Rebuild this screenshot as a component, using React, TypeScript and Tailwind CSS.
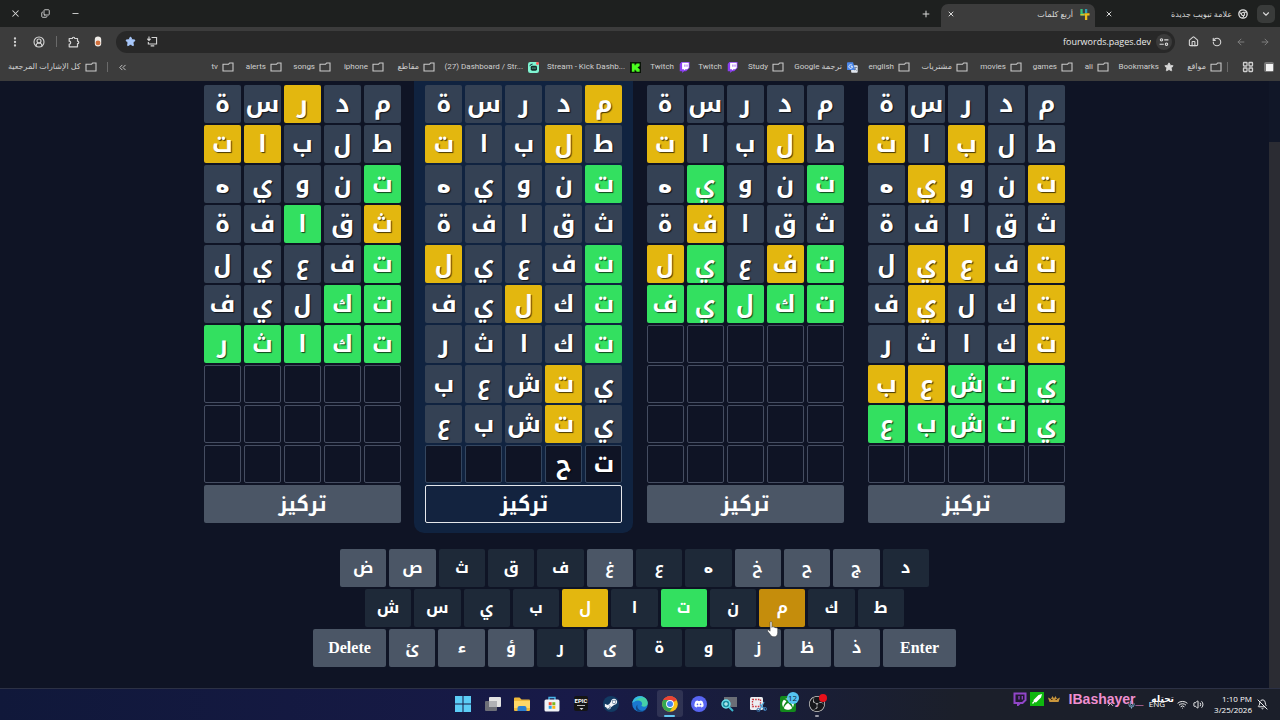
import React from "react";
import {
  ArrowLeft, ArrowRight, ChevronDown, ChevronsLeft, CircleUserRound, Copy, EllipsisVertical, House, LayoutGrid,
  Minus, Plus, RotateCcw, Star, Wifi, Volume2, BellOff, X, ChevronUp, Mic,
} from "lucide-react";
import { FaDiscord, FaSteamSymbol, FaXbox } from "react-icons/fa";
import { SiObsstudio } from "react-icons/si";

const UI = "font-['Open_Sans','DejaVu_Sans',sans-serif]";

/* ---------- small icons ---------- */

const Folder = () => (
  <svg viewBox="0 0 12 10" className="h-[10px] w-[12px]" fill="none" stroke="#c9c9c9" strokeWidth="1.1">
    <path d="M1 2.2h5.6L7.7 1H11v8H1z" />
  </svg>
);

const Twitch = () => (
  <svg viewBox="0 0 12 12" className="h-[11px] w-[11px]">
    <path d="M2.5 0 .8 2.3V10H3.5v2L5.6 10h2.2L11.5 6.6V0z" fill="#8b3ff0" />
    <path d="M3.4.9h7.2v5.3L8.9 7.9H7L5.4 9.4V7.9h-2z" fill="#fff" />
    <path d="M6 2.6h.9v2.7H6zM8.3 2.6h.9v2.7h-.9z" fill="#8b3ff0" />
  </svg>
);

const Kick = () => (
  <svg viewBox="0 0 12 12" className="h-[11px] w-[11px]">
    <path d="M0 0h12v12H0z" fill="#0a1408" />
    <path d="M2 1.5h3v2h1v-1h1v-1h3.5v3h-1v1h-1v1h1v1h1v3H7v-1H6v-1H5v2H2z" fill="#4bff1f" />
  </svg>
);

const Streamlabs = () => (
  <svg viewBox="0 0 12 12" className="h-[11px] w-[11px]">
    <rect width="12" height="12" rx="2.5" fill="#80f5d2" />
    <path d="M2 4.5Q2.3 2.3 5 2.3" fill="none" stroke="#123" strokeWidth="1" />
    <rect x="3" y="4.2" width="6.8" height="5.4" rx="1.6" fill="#16322d" />
    <path d="M5.4 6v1.4M7.6 6v1.4" stroke="#80f5d2" strokeWidth=".9" />
    <circle cx="10.3" cy="1.6" r="1.6" fill="#ff5a5a" />
  </svg>
);

const Translate = () => (
  <svg viewBox="0 0 12 12" className="h-[11px] w-[11px]">
    <rect x="4.5" y="3.5" width="7.2" height="8.2" rx="1" fill="#dfe5ee" />
    <path d="M1 .3h5.6L9 8.8H1a1 1 0 0 1-1-1V1.3a1 1 0 0 1 1-1z" fill="#4a86e8" />
    <path d="M5.6 3.8A2 2 0 1 0 6 5H4.2" fill="none" stroke="#fff" strokeWidth=".9" />
    <path d="M8 6h3M9.5 5.2V6c0 1.4-.8 2.4-1.7 3M8.6 7.3l2.1 2.2" fill="none" stroke="#5b6b80" strokeWidth=".7" />
  </svg>
);

const FilledStar = () => <Star className="h-[10px] w-[10px] fill-[#d8d8d8] text-[#d8d8d8]" />;

const FourWords = () => (
  <svg viewBox="0 0 12 12" className="h-[11px] w-[11px]">
    <path d="M1.500 0h2.500v4.500H6V7H1.500z" fill="#37c27a" />
    <path d="M6.500 0H9v4.500H6.500z" fill="#2e9fb5" />
    <path d="M6 4.500h5.500V7H9v5H6.500V7H6z" fill="#f0bd1c" />
    <path d="M1.500 5.500H6V7H1.500z" fill="#d9c22e" />
  </svg>
);

const ChromeMono = () => (
  <svg viewBox="0 0 12 12" className="h-[10px] w-[10px]" fill="none" stroke="#dedede" strokeWidth="1.6">
    <circle cx="6" cy="6" r="5" />
    <circle cx="6" cy="6" r="1.9" strokeWidth="1.3" />
    <path d="M6 3.9h4.6M4.2 7 1.8 3.2M7.8 7 5.4 11" strokeWidth="1.2" />
  </svg>
);

const Tune = () => (
  <svg viewBox="0 0 12 12" className="h-[10px] w-[10px]" fill="none" stroke="#dedede" strokeWidth="1.3">
    <circle cx="3" cy="3.4" r="1.4" />
    <path d="M6.3 3.4h5M.7 8.6h5" />
    <circle cx="9" cy="8.6" r="1.4" />
  </svg>
);

const InstallApp = () => (
  <svg viewBox="0 0 12 12" className="h-[11px] w-[12px]" fill="none" stroke="#d5d5d5" strokeWidth="1.2">
    <path d="M5.5 1.7H11v7H2V6.5M4.5 10.8h4M2.7.5v4.2M.9 3l1.800 1.800L4.500 3" />
  </svg>
);

const Extensions = () => (
  <svg viewBox="0 0 12 12" className="h-[12px] w-[12px]" fill="none" stroke="#d6d6d6" strokeWidth="1.200" strokeLinejoin="round">
    <path d="M1.200 2.500h3.100a1.250 1.250 0 0 1 2.500 0h2.700v2.700a1.250 1.250 0 0 1 0 2.500v3.100H1.200V8.200a1.500 1.500 0 0 0 0-3z" />
  </svg>
);

/* ---------- browser chrome ---------- */

const iconButton = "flex h-[18px] w-6 shrink-0 items-center justify-center text-[#d6d6d6]";

function TabStrip() {
  return (
    <div className="flex h-[27px] items-stretch bg-[#1e201f] text-[8px] text-[#d8d8d8]">
      <div className="flex w-[28px] items-center justify-center">
        <button aria-label="بحث في علامات التبويب" className="flex h-[18px] w-[18px] items-center justify-center rounded-[5px] bg-[#393b3a]">
          <ChevronDown size={10} strokeWidth={2.6} />
        </button>
      </div>
      <div role="tablist" className="flex items-stretch">
        <div role="tab" aria-selected="false" className="flex w-[157px] items-center gap-[6px] pr-[4px]">
          <ChromeMono />
          <span className="flex-1">علامة تبويب جديدة</span>
          <button aria-label="إغلاق" className="pl-[10px]"><X size={8} strokeWidth={3} /></button>
        </div>
        <div role="tab" aria-selected="true" className="mt-1 flex w-[154px] items-center gap-[6px] rounded-t-[7px] bg-[#3c3c3c] pr-[5px] pb-[3px]">
          <FourWords />
          <span className="flex-1">أربع كلمات</span>
          <button aria-label="إغلاق" className="pl-[6px]"><X size={8} strokeWidth={3} /></button>
        </div>
      </div>
      <button aria-label="علامة تبويب جديدة" className="flex w-[30px] items-center justify-center"><Plus size={10} strokeWidth={2.4} /></button>
      <div className="flex-1" />
      <div className="flex items-center">
        <button aria-label="تصغير" className="flex w-[30px] justify-center"><Minus size={9} strokeWidth={2.4} /></button>
        <button aria-label="استعادة" className="flex w-[30px] justify-center"><Copy size={9} strokeWidth={2.4} className="-scale-y-100" /></button>
        <button aria-label="إغلاق النافذة" className="flex w-[30px] justify-center"><X size={11} strokeWidth={2.2} /></button>
      </div>
    </div>
  );
}

function Toolbar() {
  return (
    <div className="flex h-[29px] items-center bg-[#3c3c3c] px-[3px]">
      <button aria-label="رجوع" className="flex h-[18px] w-6 items-center justify-center text-[#7c7c7c]"><ArrowRight size={10} strokeWidth={2.4} /></button>
      <button aria-label="تقدم" className="flex h-[18px] w-6 items-center justify-center text-[#7c7c7c]"><ArrowLeft size={10} strokeWidth={2.4} /></button>
      <button aria-label="إعادة تحميل" className={iconButton}><RotateCcw size={10} strokeWidth={2.6} /></button>
      <button aria-label="الصفحة الرئيسية" className={iconButton}><House size={11} strokeWidth={2.4} /></button>
      <div className="mr-[6px] flex h-[22px] flex-1 items-center rounded-full bg-[#282828] pr-[3px] pl-[9px]">
        <button aria-label="معلومات الموقع" className="flex h-4 w-4 items-center justify-center rounded-full bg-[#3b3b3b]"><Tune /></button>
        <input aria-label="شريط العناوين" dir="ltr" defaultValue="fourwords.pages.dev" className="min-w-0 flex-1 bg-transparent pr-[5px] text-right text-[9px] leading-4 text-[#ececec] outline-none" />
        <button aria-label="تثبيت التطبيق" className="ml-[10px]"><InstallApp /></button>
        <button aria-label="إشارة مرجعية"><Star size={11} className="fill-[#a8c7fa] text-[#a8c7fa]" /></button>
      </div>
      <button aria-label="إضافة" className="mr-[6px] flex h-[18px] w-6 items-center justify-center">
        <svg viewBox="0 0 8 12" className="h-[11px] w-[8px]">
          <rect x=".5" y=".5" width="7" height="11" rx="3.5" fill="#f0ece8" />
          <circle cx="4" cy="7.6" r="2.6" fill="#d2703c" />
        </svg>
      </button>
      <button aria-label="الإضافات" className={iconButton}><Extensions /></button>
      <span className="mx-[5px] h-[11px] w-px bg-[#6a6a6a]" />
      <button aria-label="الملف الشخصي" className={iconButton}><CircleUserRound size={12} strokeWidth={2.200} /></button>
      <button aria-label="القائمة" className={iconButton}><EllipsisVertical size={12} strokeWidth={2.6} /></button>
    </div>
  );
}

const bookmarks = [
  { name: "مواقع", icon: <Folder />, width: "w-[47px]" },
  { name: "Bookmarks", icon: <FilledStar />, width: "w-[66px]" },
  { name: "ali", icon: <Folder />, width: "w-[36px]" },
  { name: "games", icon: <Folder />, width: "w-[51px]" },
  { name: "movies", icon: <Folder />, width: "w-[54px]" },
  { name: "مشتريات", icon: <Folder />, width: "w-[58px]" },
  { name: "english", icon: <Folder />, width: "w-[52px]" },
  { name: "ترجمة Google", icon: <Translate />, width: "w-[74px]" },
  { name: "Study", icon: <Folder />, width: "w-[46px]" },
  { name: "Twitch", icon: <Twitch />, width: "w-[48px]" },
  { name: "Twitch", icon: <Twitch />, width: "w-[49px]" },
  { name: "Stream - Kick Dashb...", icon: <Kick />, width: "w-[102px]", ltr: true },
  { name: "(27) Dashboard / Str...", icon: <Streamlabs />, width: "w-[104px]", ltr: true },
  { name: "مقاطع", icon: <Folder />, width: "w-[51px]" },
  { name: "iphone", icon: <Folder />, width: "w-[53px]" },
  { name: "songs", icon: <Folder />, width: "w-[49px]" },
  { name: "alerts", icon: <Folder />, width: "w-[48px]" },
  { name: "tv", icon: <Folder />, width: "w-[30px]" },
];

function BookmarksBar() {
  return (
    <nav aria-label="الإشارات المرجعية" className="flex h-[25px] items-center bg-[#3c3c3c] pr-[6px] pb-[3px] pl-2 font-[Roboto,'DejaVu_Sans',sans-serif] text-[8px] whitespace-nowrap text-[#cfcfcf]">
      <span className="flex h-[10px] w-[10px] items-center justify-center rounded-[2px] bg-[#777]"><span className="h-[7px] w-[7px] bg-[#f4f4f4]" /></span>
      <LayoutGrid size={12} strokeWidth={2.6} className="mr-[10px]" />
      <span className="mr-[14px] ml-[5px] h-[10px] w-px bg-[#6a6a6a]" />
      {bookmarks.map((b, i) => (
        <a key={i} href="#" className={`${b.width} flex shrink-0 items-center gap-1`}>
          <span className="flex w-3 shrink-0 justify-center">{b.icon}</span>
          <span dir={b.ltr ? "ltr" : "rtl"}>{b.name}</span>
        </a>
      ))}
      <div className="flex-1" />
      <button aria-label="المزيد" className="ml-[9px]"><ChevronsLeft size={11} /></button>
      <span className="ml-[10px] h-[10px] w-px bg-[#6a6a6a]" />
      <a href="#" className="flex items-center gap-1"><Folder />كل الإشارات المرجعية</a>
    </nav>
  );
}

/* ---------- game ---------- */

const guesses = ["مدرسة", "طلبات", "تنويه", "ثقافة", "تفعيل", "تكليف", "تكاثر", "يتشعب", "يتشبع"];

const boards = [
  ["..y..", "...yy", "g....", "y.g..", "g....", "gg...", "ggggg"],
  ["y....", ".y..y", "g....", ".....", "g...y", "g.y..", "g....", ".y...", ".y..."],
  [".....", ".y..y", "g..g.", "...y.", "gy.gy", "ggggg"],
  [".....", "..y.y", "y..y.", ".....", "y.yy.", "y..y.", "y....", "gggyy", "ggggg"],
];

const focused = 1;
const draft = "تح";

const cellStyle: Record<string, string> = {
  g: "bg-[#33e060]",
  y: "bg-[#e3b70f]",
  ".": "bg-[#344154]",
  empty: "border border-[#454d61] bg-[#0f1425]",
  typing: "border border-[#34465f] bg-[#0f1425]",
};

// The heh is set in DejaVu, whose isolated form is the round one.
const letterFont = (letter: string) => (letter === "ه" ? "font-['DejaVu_Sans',sans-serif]" : "");

function Board({ marks, active }: { marks: string[]; active: boolean }) {
  return (
    <section className={`flex flex-col gap-[2px] rounded-b-[10px] px-[11px] pt-1 pb-[10px] ${active ? "bg-[#102340]" : ""}`}>
      {Array.from({ length: 10 }, (_, r) => (
        <div key={r} className="flex gap-[3px]">
          {Array.from({ length: 5 }, (_, c) => {
            const typing = active && r === marks.length;
            const state = marks[r] ? marks[r][c] : typing ? "typing" : "empty";
            const letter = marks[r] ? guesses[r][c] : (typing && draft[c]) || "";
            return (
              <div key={c} className={`flex h-[38px] w-[37px] items-center justify-center rounded-[2px] ${cellStyle[state]} ${letterFont(letter)}`}>
                {letter}
              </div>
            );
          })}
        </div>
      ))}
      <button className={`h-[38px] rounded-[2px] text-xl leading-7 ${active ? "border border-[#e5e7eb] bg-[#13233f]" : "bg-[#4b5666]"}`}>تركيز</button>
    </section>
  );
}

const rows = [
  { width: "w-[589px]", keys: ["ض", "ص", "ث", "ق", "ف", "غ", "ع", "ه", "خ", "ح", "ج", "د"] },
  { width: "w-[539px]", keys: ["ش", "س", "ي", "ب", "ل", "ا", "ت", "ن", "م", "ك", "ط"] },
  { width: "w-[643px]", keys: ["Delete", "ئ", "ء", "ؤ", "ر", "ى", "ة", "و", "ز", "ظ", "ذ", "Enter"] },
];

function keyColor(k: string) {
  if (k === "ت") return "bg-[#33e060]";
  if (k === "ل") return "bg-[#e3b70f]";
  if (k === "م") return "bg-[#c58d0c]";
  return "ثقفعهدشسيبانكطرةو".includes(k) ? "bg-[#1e2938]" : "bg-[#4b5666]";
}

const Hand = () => (
  <svg viewBox="0 0 12 17" className="absolute top-[32px] left-[8px] z-10 h-[17px] w-[12px]">
    <path
      d="M3.1 1.4c0-1.2 1.8-1.2 1.8 0v5l.2-.6c1-.5 1.8 0 1.9.6.8-.5 1.6-.1 1.8.6 1-.4 1.9.1 1.9 1.1v3.3c0 2.3-1 4.4-3.6 4.4-2.3 0-3-.9-3.8-2.2L.8 10.500c-.7-1.200.5-2 1.400-1.200l.9.900z"
      fill="#fff" stroke="#333" strokeWidth=".5"
    />
  </svg>
);

function Keyboard() {
  return (
    <div dir="ltr" className="flex flex-col items-center gap-[2px] text-base leading-6">
      {rows.map((row) => (
        <div key={row.width} className={`${row.width} flex gap-[3px]`}>
          {row.keys.map((k) => {
            const wide = k.length > 1;
            return (
              <button
                key={k}
                className={`relative h-[38px] rounded-[2px] ${wide ? "w-[73px] font-['Liberation_Serif',serif]" : "min-w-0 flex-1"} ${keyColor(k)} ${letterFont(k)}`}
              >
                {k}
                {k === "م" && <Hand />}
              </button>
            );
          })}
        </div>
      ))}
    </div>
  );
}

/* ---------- taskbar ---------- */

const taskIcons: { name: string; icon: React.ReactNode }[] = [
  { name: "Start", icon: <svg viewBox="0 0 16 16" className="h-4 w-4" fill="#5ccdf7"><path d="M0 0h7.500v7.500H0zM8.500 0H16v7.500H8.500zM0 8.500h7.500V16H0zM8.500 8.500H16V16H8.500z" /></svg> },
  { name: "Task View", icon: <svg viewBox="0 0 18 16" className="h-4 w-[18px]"><rect x="1" y="5" width="12" height="10" rx="1" fill="#6d6f78" /><rect x="5" y="1" width="12" height="10" rx="1" fill="#e3e3e3" /><path d="M5 5h8v6H5z" fill="#b0b1b5" /></svg> },
  { name: "File Explorer", icon: <svg viewBox="0 0 18 16" className="h-4 w-[18px]"><path d="M1 2.500a1 1 0 0 1 1-1h4.500l2 2H16a1 1 0 0 1 1 1V14a1 1 0 0 1-1 1H2a1 1 0 0 1-1-1z" fill="#f0b93a" /><path d="M1 5h16v7H1z" fill="#ffd867" /><path d="M4.500 15v-3a2 2 0 0 1 2-2h5a2 2 0 0 1 2 2v3z" fill="#2b7fd0" /></svg> },
  { name: "Microsoft Store", icon: <svg viewBox="0 0 16 16" className="h-4 w-4"><path d="M5 4V1.500h6V4" fill="none" stroke="#49b6ea" strokeWidth="1.400" /><rect x=".5" y="3.500" width="15" height="12" rx="1.500" fill="#f1f3f6" /><path d="M4.700 6.200h3v3h-3z" fill="#ef5030" /><path d="M8.300 6.200h3v3h-3z" fill="#7cb81e" /><path d="M4.700 9.800h3v3h-3z" fill="#27a3e8" /><path d="M8.300 9.800h3v3h-3z" fill="#fbb813" /></svg> },
  { name: "Epic Games", icon: <span className="flex h-[15px] w-[14px] flex-col items-center rounded-[2px] bg-[#151515] pt-[2px] font-[Roboto,sans-serif] text-[6px] leading-[6px] font-bold text-white">EPIC<span className="mt-px h-px w-[8px] bg-[#bbb]" /><svg viewBox="0 0 6 3" className="mt-[2px] h-[2px] w-[5px]" fill="#ddd"><path d="M0 0h6L3 3z" /></svg></span> },
  { name: "Steam", icon: <span className="flex h-4 w-4 items-center justify-center rounded-full bg-[#123a63]"><FaSteamSymbol size={14} color="#f3f6fa" /></span> },
  { name: "Edge", icon: <svg viewBox="0 0 16 16" className="h-4 w-4"><circle cx="8" cy="8" r="7.800" fill="#1a78cf" /><path d="M.4 7C1 3 4 .2 8 .2c4.600 0 7.800 3.300 7.800 6.800 0 2.400-1.800 3.800-3.800 3.800-1.500 0-2.500-.6-2.500-1.200 0-.5.6-.8.6-1.800C10.100 6 8.500 4.600 6 4.600 3.500 4.600 1.300 5.700.4 7z" fill="#45d0a8" /><path d="M.4 7C1 3 4 .2 8 .2c2 0 3.600.6 5 1.700C9 1 5 2 3.200 5.300 2 5.600 1 6.300.4 7z" fill="#35b7e8" /><path d="M5.600 8.500c-1 3 1 5.800 4.200 6.200 1.800.2 3.300-.5 4.500-1.800-1.400 2-3.500 2.900-6.300 2.900C4.500 15.500 2 12 5.600 8.500z" fill="#114a8b" /></svg> },
  { name: "Chrome", icon: <svg viewBox="0 0 16 16" className="h-4 w-4"><circle cx="8" cy="8" r="7.800" fill="#fbc116" /><path d="M8 8 1.250 4.100A7.800 7.800 0 0 1 14.750 4.100z" fill="#ea4335" /><path d="M1.250 4.100A7.800 7.800 0 0 0 7.500 15.800L11.400 9.900 8 8z" fill="#34a853" /><path d="M1.250 4.100 4.600 9.900 8 8 8 4.100z" fill="#34a853" /><path d="M1.250 4.100 8 4.100h6.750A7.800 7.800 0 0 0 1.250 4.100z" fill="#ea4335" /><circle cx="8" cy="8" r="3.900" fill="#fff" /><circle cx="8" cy="8" r="3" fill="#4285f4" /></svg> },
  { name: "Discord", icon: <span className="flex h-4 w-4 items-center justify-center rounded-full bg-[#5865f2]"><FaDiscord size={10} color="#fff" /></span> },
  { name: "Magnifier", icon: <svg viewBox="0 0 18 16" className="h-4 w-[18px]"><rect x="4" y="1" width="13" height="10" fill="#6b6e76" /><path d="m9 11 4 4" stroke="#39b8cf" strokeWidth="2" /><circle cx="6" cy="8" r="4" fill="#1d8fa3" stroke="#6fe3ef" strokeWidth="1.400" /><path d="M4 8h4M6 6v4" stroke="#d8ffff" /></svg> },
  { name: "Snipping Tool", icon: <svg viewBox="0 0 18 16" className="h-4 w-[18px]"><rect x="1" y="1" width="13" height="13" rx="1.500" fill="#eceef1" /><rect x="3.500" y="3.500" width="8" height="7" fill="none" stroke="#c8323c" strokeWidth="1.300" strokeDasharray="1.500 1.200" /><path d="m10 15 5-9M16 14l-5-6" stroke="#4f9fd0" strokeWidth="1.300" /><circle cx="9.500" cy="14" r="1.600" fill="none" stroke="#3a6ea5" /><circle cx="16" cy="13" r="1.600" fill="none" stroke="#3a6ea5" /></svg> },
  { name: "Xbox", icon: <span className="relative flex h-4 w-4 items-center justify-center rounded-[2px] bg-[#138a1c]"><FaXbox size={12} color="#fff" /><span className="absolute -top-[4px] left-[7px] flex h-[12px] w-[12px] items-center justify-center rounded-full bg-[#55c4f2] text-[8px] leading-none text-[#10263a]">12</span></span> },
  { name: "OBS Studio", icon: <span className="relative flex h-4 w-4 items-center justify-center rounded-full bg-[#17171b]"><SiObsstudio size={16} color="#cfcfcf" /><span className="absolute -top-[2px] left-[10px] h-[8px] w-[8px] rounded-full bg-[#e8101a]" /></span> },
];

function Taskbar() {
  return (
    <footer dir="ltr" className="grid h-8 grid-cols-[1fr_380px_1fr] border-t border-[#2c3145] bg-linear-to-r from-[#10183a] via-[#181a48] via-45% to-[#1b1f2a] to-75%">
      <div />
      <div className="flex items-center justify-between pb-[2px]">
        {taskIcons.map(({ name, icon }) => (
          <button
            key={name}
            aria-label={name}
            className={`relative flex h-[27px] w-[26px] items-center justify-center rounded-[3px] ${name === "Chrome" ? "bg-white/10" : ""}`}
          >
            {icon}
            {name === "Chrome" && <span className="absolute bottom-0 h-[2px] w-[11px] rounded-full bg-[#63c7f3]" />}
            {name === "OBS Studio" && <span className="absolute bottom-0 h-[2px] w-1 rounded-full bg-[#9a9aa6]" />}
          </button>
        ))}
      </div>
      <div className="relative flex items-center justify-end pr-3 pb-px text-white">
        <ChevronUp size={9} className="mr-[12px]" />
        <Mic size={9} className="mr-[13px] text-[#8fc9ee]" />
        <span className="mr-[12px] text-[8px]">ENG</span>
        <Wifi size={11} className="mr-[5px]" />
        <Volume2 size={11} className="mr-[10px]" />
        <div className="mr-[5px] w-[38px] text-right text-[8px] leading-[11px] whitespace-nowrap"><div>1:10 PM</div><div>3/25/2026</div></div>
        <BellOff size={11} />
        <div className="absolute top-0 right-[106px] flex h-5 items-center whitespace-nowrap">
          <svg viewBox="0 0 14 14" className="mr-[3px] h-[14px] w-[14px]"><path d="M1.500 1.500h11v6.500l-3 3H7L5 13v-2H1.500z" fill="#201a30" stroke="#9146c8" strokeWidth="2" /><path d="M6 4v3.500M9.300 4v3.500" stroke="#9146c8" strokeWidth="1.300" /></svg>
          <svg viewBox="0 0 14 14" className="mr-[4px] h-[14px] w-[14px]"><rect width="14" height="14" fill="#0fb80f" /><path d="m12 2-1 3.500-5 5-1.500-.4L3 12l-1-1 1.700-1.700L3.500 8l5-5z" fill="#fff" /></svg>
          <svg viewBox="0 0 12 8" className="mr-[9px] h-[8px] w-[12px]"><path d="M0 2.500 3 4l1.500-3L6 3.500 7.500 1 9 4l3-1.500L10.500 7h-9z" fill="#c9963c" /><path d="M3 4.500h1.500M7.500 4.500H9" stroke="#4a2d12" /></svg>
          <span className="font-['Liberation_Sans',Arial,sans-serif] text-[14px] leading-5 font-bold text-[#f08fd0]">IBashayer_</span>
          <span className="ml-[8px] font-['DejaVu_Sans',sans-serif] text-[9px] leading-4 font-bold">تحتله</span>
        </div>
      </div>
    </footer>
  );
}

export default function App() {
  return (
    <div dir="rtl" lang="ar" className={`flex min-h-screen flex-col bg-[#0f1425] ${UI}`}>
      <header>
        <TabStrip />
        <Toolbar />
        <BookmarksBar />
      </header>
      <div dir="ltr" className="flex flex-1">
        <main className="flex flex-1 flex-col items-center font-['Noto_Kufi_Arabic','DejaVu_Sans',sans-serif] font-bold text-white">
          <div dir="rtl" className="flex w-[883px] flex-row-reverse justify-between text-2xl leading-8 [text-shadow:1px_1px_1px_rgba(0,0,0,0.7)]">
            {boards.map((marks, i) => (
              <Board key={i} marks={marks} active={i === focused} />
            ))}
          </div>
          <div className="pt-4 pb-5"><Keyboard /></div>
        </main>
        <div className="flex w-[11px] flex-col bg-[#111728] pt-[61px]">
          <div className="flex-1 bg-[#2b2c33]" />
        </div>
      </div>
      <Taskbar />
    </div>
  );
}
